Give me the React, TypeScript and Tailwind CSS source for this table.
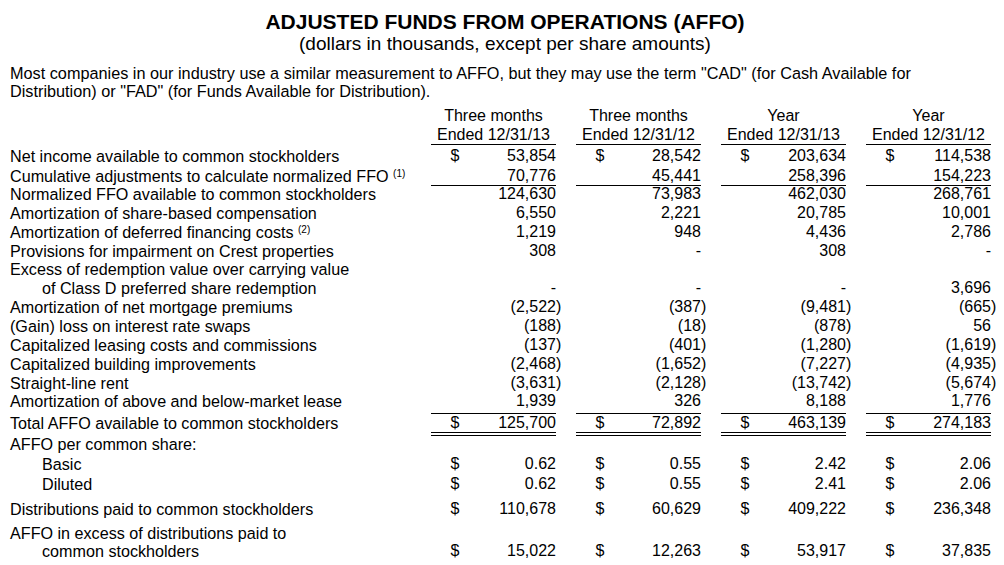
type Row = {
  label: React.ReactNode
  indent?: boolean
  vals?: string[]
  dollar?: boolean
  rowCls: string
  padCls: string
  line?: 'single' | 'double'
}

const rows: Row[] = [
  {
    label: 'Net income available to common stockholders',
    vals: ['53,854', '28,542', '203,634', '114,538'],
    dollar: true,
    rowCls: 'h-[21px]',
    padCls: 'pt-[2.5px]',
  },
  {
    label: (
      <>
        Cumulative adjustments to calculate normalized FFO <sup className="text-[10px]">(1)</sup>
      </>
    ),
    vals: ['70,776', '45,441', '258,396', '154,223'],
    rowCls: 'h-[20px]',
    padCls: 'pt-[1.5px]',
    line: 'single',
  },
  {
    label: 'Normalized FFO available to common stockholders',
    vals: ['124,630', '73,983', '462,030', '268,761'],
    rowCls: 'h-[18.86px]',
    padCls: 'pt-0',
  },
  {
    label: 'Amortization of share-based compensation',
    vals: ['6,550', '2,221', '20,785', '10,001'],
    rowCls: 'h-[18.86px]',
    padCls: 'pt-0',
  },
  {
    label: (
      <>
        Amortization of deferred financing costs <sup className="text-[10px]">(2)</sup>
      </>
    ),
    vals: ['1,219', '948', '4,436', '2,786'],
    rowCls: 'h-[18.86px]',
    padCls: 'pt-0',
  },
  {
    label: 'Provisions for impairment on Crest properties',
    vals: ['308', '-', '308', '-'],
    rowCls: 'h-[18.86px]',
    padCls: 'pt-0',
  },
  {
    label: 'Excess of redemption value over carrying value',
    rowCls: 'h-[18.86px]',
    padCls: 'pt-0',
  },
  {
    label: 'of Class D preferred share redemption',
    indent: true,
    vals: ['-', '-', '-', '3,696'],
    rowCls: 'h-[18.86px]',
    padCls: 'pt-0',
  },
  {
    label: 'Amortization of net mortgage premiums',
    vals: ['(2,522)', '(387)', '(9,481)', '(665)'],
    rowCls: 'h-[18.86px]',
    padCls: 'pt-0',
  },
  {
    label: '(Gain) loss on interest rate swaps',
    vals: ['(188)', '(18)', '(878)', '56'],
    rowCls: 'h-[18.86px]',
    padCls: 'pt-0',
  },
  {
    label: 'Capitalized leasing costs and commissions',
    vals: ['(137)', '(401)', '(1,280)', '(1,619)'],
    rowCls: 'h-[18.86px]',
    padCls: 'pt-0',
  },
  {
    label: 'Capitalized building improvements',
    vals: ['(2,468)', '(1,652)', '(7,227)', '(4,935)'],
    rowCls: 'h-[18.86px]',
    padCls: 'pt-0',
  },
  {
    label: 'Straight-line rent',
    vals: ['(3,631)', '(2,128)', '(13,742)', '(5,674)'],
    rowCls: 'h-[18.86px]',
    padCls: 'pt-0',
  },
  {
    label: 'Amortization of above and below-market lease',
    vals: ['1,939', '326', '8,188', '1,776'],
    rowCls: 'h-[20.5px]',
    padCls: 'pt-0',
    line: 'single',
  },
  {
    label: 'Total AFFO available to common stockholders',
    vals: ['125,700', '72,892', '463,139', '274,183'],
    dollar: true,
    rowCls: 'h-[22px]',
    padCls: 'pt-[1px]',
    line: 'double',
  },
  { label: 'AFFO per common share:', rowCls: 'h-[18px]', padCls: 'pt-0' },
  {
    label: 'Basic',
    indent: true,
    vals: ['0.62', '0.55', '2.42', '2.06'],
    dollar: true,
    rowCls: 'h-[20px]',
    padCls: 'pt-[1.75px]',
  },
  {
    label: 'Diluted',
    indent: true,
    vals: ['0.62', '0.55', '2.41', '2.06'],
    dollar: true,
    rowCls: 'h-[25px]',
    padCls: 'pt-[1.75px]',
  },
  {
    label: 'Distributions paid to common stockholders',
    vals: ['110,678', '60,629', '409,222', '236,348'],
    dollar: true,
    rowCls: 'h-[24px]',
    padCls: 'pt-[2.5px]',
  },
  { label: 'AFFO in excess of distributions paid to', rowCls: 'h-[19px]', padCls: 'pt-[2px]' },
  {
    label: 'common stockholders',
    indent: true,
    vals: ['15,022', '12,263', '53,917', '37,835'],
    dollar: true,
    rowCls: 'h-[20px]',
    padCls: 'pt-[1px]',
  },
]

const heads = [
  ['Three months', 'Ended 12/31/13'],
  ['Three months', 'Ended 12/31/12'],
  ['Year', 'Ended 12/31/13'],
  ['Year', 'Ended 12/31/12'],
]

const grid = 'grid grid-cols-[401px_125px_125px_125px_125px] gap-x-[20px]'

function Amount({ v }: { v: string }) {
  // closing paren hangs past the column edge, like the accounting format
  if (v.startsWith('(')) return <span className="ml-auto -mr-[5.3px]">{v}</span>
  return <span className="ml-auto">{v}</span>
}

export default function App() {
  return (
    <div
      className="w-[1004px] h-[565px] bg-white text-black overflow-hidden"
      style={{ fontFamily: '"Liberation Sans", Arial, sans-serif' }}
    >
      <div className="pl-[6px] text-center">
        <h1 className="pt-[11px] text-[21px] leading-[22px] font-bold">ADJUSTED FUNDS FROM OPERATIONS (AFFO)</h1>
        <p className="text-[19px] leading-[21px]">(dollars in thousands, except per share amounts)</p>
      </div>

      <p className="mt-[9.5px] pl-[10px] text-[16.25px] leading-[18.4px] whitespace-nowrap">
        Most companies in our industry use a similar measurement to AFFO, but they may use the term "CAD" (for Cash Available for
        <br />
        Distribution) or "FAD" (for Funds Available for Distribution).
      </p>

      <div className="mt-[5.7px] pl-[10px] text-[16px] leading-4">
        <div className={`${grid} h-[19px]`}>
          <div />
          {heads.map((h, i) => (
            <div key={i} className="pt-[2px] text-center">
              {h[0]}
            </div>
          ))}
        </div>
        <div className={`${grid} h-[20px]`}>
          <div />
          {heads.map((h, i) => (
            <div key={i} className="h-full pt-[2px] text-center border-b border-black">
              {h[1]}
            </div>
          ))}
        </div>

        {rows.map((r, i) => (
          <div key={i} className={`${grid} ${r.rowCls}`}>
            <div className={`${r.padCls} text-[16.15px] whitespace-nowrap ${r.indent ? 'pl-[32px]' : ''}`}>
              {r.label}
            </div>
            {(r.vals ?? ['', '', '', '']).map((v, j) => (
              <div
                key={j}
                className={`h-full flex ${r.padCls} pl-[19.5px] ${
                  r.line === 'single'
                    ? 'border-b border-black'
                    : r.line === 'double'
                      ? 'border-b-4 border-double border-black'
                      : ''
                }`}
              >
                {r.dollar && <span>$</span>}
                {v && <Amount v={v} />}
              </div>
            ))}
          </div>
        ))}
      </div>
    </div>
  )
}
